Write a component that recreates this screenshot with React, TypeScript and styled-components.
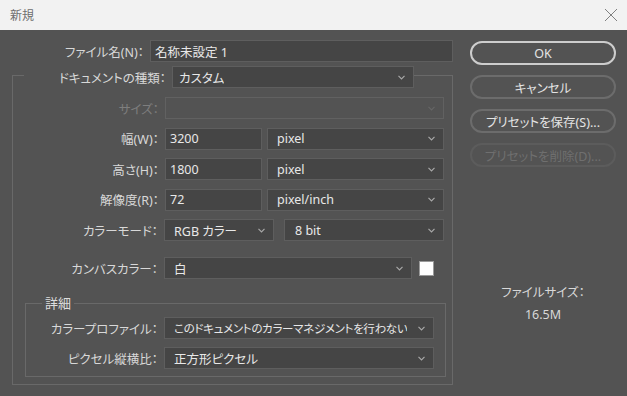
import React from 'react'
import styled, { createGlobalStyle } from 'styled-components'

const GlobalStyle = createGlobalStyle`
  html, body {
    margin: 0;
    padding: 0;
    background: #535353;
  }
  body {
    font-family: 'Noto Sans', 'Noto Sans CJK JP', sans-serif;
    font-feature-settings: 'palt';
    -webkit-font-smoothing: antialiased;
  }
`

const Window = styled.div`
  width: 627px;
  height: 396px;
  background: #535353;
  overflow: hidden;
`
const TitleBar = styled.div`
  display: flex;
  align-items: center;
  justify-content: space-between;
  height: 30px;
  padding: 0 8px 0 10px;
  background: #f2f2f2;
  box-sizing: border-box;
`
const Title = styled.span`
  font-size: 12px;
  color: #6e6e6e;
`
const Body = styled.div`
  display: flex;
  padding: 10px 0 0 12px;
`
const LeftPane = styled.div`
  display: flex;
  flex-direction: column;
  width: 441px;
`
const RightPane = styled.div`
  display: flex;
  flex-direction: column;
  align-items: center;
  width: 146px;
  margin: 1px 0 0 17px;
  gap: 10px;
`
const Row = styled.div<{ $label: number }>`
  display: grid;
  grid-template-columns: ${({ $label }) => $label}px minmax(0, 1fr);
  column-gap: 4px;
  align-items: center;
  height: 22px;
`
const Label = styled.span<{ $disabled?: boolean }>`
  font-size: 12.5px;
  text-align: right;
  white-space: nowrap;
  padding-right: 2px;
  color: ${({ $disabled }) => ($disabled ? '#7e7e7e' : '#d8d8d8')};
`
const Pair = styled.div<{ $cols: string; $gap: number }>`
  display: grid;
  grid-template-columns: ${({ $cols }) => $cols};
  column-gap: ${({ $gap }) => $gap}px;
  align-items: center;
  height: 22px;
`
const Field = styled.div`
  display: flex;
  align-items: center;
  height: 22px;
  box-sizing: border-box;
  padding-left: 4px;
  background: #454545;
  border: 1px solid #5e5e5e;
  font-size: 12.5px;
  color: #e8e8e8;
  white-space: nowrap;
  overflow: hidden;
`
const SelectBox = styled.div<{ $disabled?: boolean; $pad?: number; $tight?: boolean }>`
  display: flex;
  align-items: center;
  justify-content: space-between;
  height: 22px;
  box-sizing: border-box;
  padding: 0 8px 0 ${({ $pad }) => $pad ?? 9}px;
  background: ${({ $disabled }) => ($disabled ? '#535353' : '#454545')};
  border: 1px solid ${({ $disabled }) => ($disabled ? '#616161' : '#5e5e5e')};
  font-size: ${({ $tight }) => ($tight ? '11.5px' : '12.5px')};
  letter-spacing: ${({ $tight }) => ($tight ? '-0.3px' : 'normal')};
  color: #e8e8e8;
  white-space: nowrap;
  overflow: hidden;
`
const SelectText = styled.span`
  min-width: 0;
  overflow: hidden;
`
const Chevron = styled.svg<{ $disabled?: boolean }>`
  flex: none;
  width: 7px;
  height: 5px;
  margin-left: 6px;
  stroke: ${({ $disabled }) => ($disabled ? '#666' : '#a8a8a8')};
`
const Group = styled.fieldset`
  margin: 0;
  padding: 0;
  width: 441px;
  box-sizing: border-box;
  border: 1px solid #696969;
`
const GroupLegend = styled.legend`
  display: flex;
  align-items: center;
  margin-left: 11px;
  padding: 4px 0 0 0;
  gap: 4px;
`
const Rows = styled.div`
  display: flex;
  flex-direction: column;
  gap: 8.5px;
  padding: 9px 8px 0 0;
`
const CanvasRow = styled(Row)`
  margin-top: 16px;
  margin-right: 8px;
`
const Swatch = styled.div`
  width: 15px;
  height: 15px;
  box-sizing: border-box;
  background: #ffffff;
  border: 1px solid #9a9a9a;
`
const Details = styled.fieldset`
  margin: 16px 6px 7px 12px;
  padding: 6px 11px 7px 0;
  border: 1px solid #696969;
  display: flex;
  flex-direction: column;
  gap: 8px;
`
const DetailsLegend = styled.legend`
  margin-left: 16px;
  padding: 0 3px;
  font-size: 13px;
  line-height: 16px;
  color: #dedede;
`
const PillButton = styled.div<{ $variant: 'primary' | 'normal' | 'disabled' }>`
  display: flex;
  align-items: center;
  justify-content: center;
  width: 146px;
  height: 24px;
  box-sizing: border-box;
  border-radius: 12px;
  border: 2px solid
    ${({ $variant }) => ($variant === 'primary' ? '#cdcdcd' : $variant === 'normal' ? '#6c6c6c' : '#5c5c5c')};
  font-size: 12.5px;
  color: ${({ $variant }) => ($variant === 'disabled' ? '#6f6f6f' : '#e4e4e4')};
`
const FileSize = styled.div`
  display: flex;
  flex-direction: column;
  align-items: center;
  gap: 6px;
  margin-top: 108px;
  font-size: 12.5px;
  line-height: 16px;
  color: #d8d8d8;
`

const Select = ({
  value,
  disabled,
  pad,
  tight,
}: {
  value?: string
  disabled?: boolean
  pad?: number
  tight?: boolean
}) => (
  <SelectBox $disabled={disabled} $pad={pad} $tight={tight}>
    <SelectText>{value}</SelectText>
    <Chevron $disabled={disabled} viewBox="0 0 7 5" fill="none" strokeWidth="1.2">
      <polyline points="0.5,0.8 3.5,3.8 6.5,0.8" />
    </Chevron>
  </SelectBox>
)

export default function App() {
  return (
    <Window>
      <GlobalStyle />
      <TitleBar>
        <Title>新規</Title>
        <svg width="16" height="16" viewBox="0 0 16 16" fill="none" stroke="#808080" strokeWidth="1">
          <line x1="2" y1="2" x2="14" y2="14" />
          <line x1="14" y1="2" x2="2" y2="14" />
        </svg>
      </TitleBar>
      <Body>
        <LeftPane>
          <Row $label={134}>
            <Label>ファイル名(N)：</Label>
            <Field>名称未設定 1</Field>
          </Row>
          <Group>
            <GroupLegend>
              <Label style={{ width: 142 }}>ドキュメントの種類：</Label>
              <div style={{ width: 242 }}>
                <Select value="カスタム" pad={6} />
              </div>
            </GroupLegend>
            <Rows>
              <Row $label={148}>
                <Label $disabled>サイズ：</Label>
                <Select disabled />
              </Row>
              <Row $label={148}>
                <Label>幅(W)：</Label>
                <Pair $cols="97px 1fr" $gap={5}>
                  <Field>3200</Field>
                  <Select value="pixel" />
                </Pair>
              </Row>
              <Row $label={148}>
                <Label>高さ(H)：</Label>
                <Pair $cols="97px 1fr" $gap={5}>
                  <Field>1800</Field>
                  <Select value="pixel" />
                </Pair>
              </Row>
              <Row $label={148}>
                <Label>解像度(R)：</Label>
                <Pair $cols="97px 1fr" $gap={5}>
                  <Field>72</Field>
                  <Select value="pixel/inch" />
                </Pair>
              </Row>
              <Row $label={147}>
                <Label>カラーモード：</Label>
                <Pair $cols="110px 1fr" $gap={10}>
                  <Select value="RGB カラー" />
                  <Select value="8 bit" pad={10} />
                </Pair>
              </Row>
            </Rows>
            <CanvasRow $label={147}>
              <Label>カンバスカラー：</Label>
              <Pair $cols="248px 15px" $gap={7}>
                <Select value="白" />
                <Swatch />
              </Pair>
            </CanvasRow>
            <Details>
              <DetailsLegend>詳細</DetailsLegend>
              <Row $label={134}>
                <Label>カラープロファイル：</Label>
                <Select value="このドキュメントのカラーマネジメントを行わない" tight />
              </Row>
              <Row $label={134}>
                <Label>ピクセル縦横比：</Label>
                <Select value="正方形ピクセル" />
              </Row>
            </Details>
          </Group>
        </LeftPane>
        <RightPane>
          <PillButton $variant="primary">OK</PillButton>
          <PillButton $variant="normal">キャンセル</PillButton>
          <PillButton $variant="normal">プリセットを保存(S)...</PillButton>
          <PillButton $variant="disabled">プリセットを削除(D)...</PillButton>
          <FileSize>
            <span>ファイルサイズ：</span>
            <span>16.5M</span>
          </FileSize>
        </RightPane>
      </Body>
    </Window>
  )
}
